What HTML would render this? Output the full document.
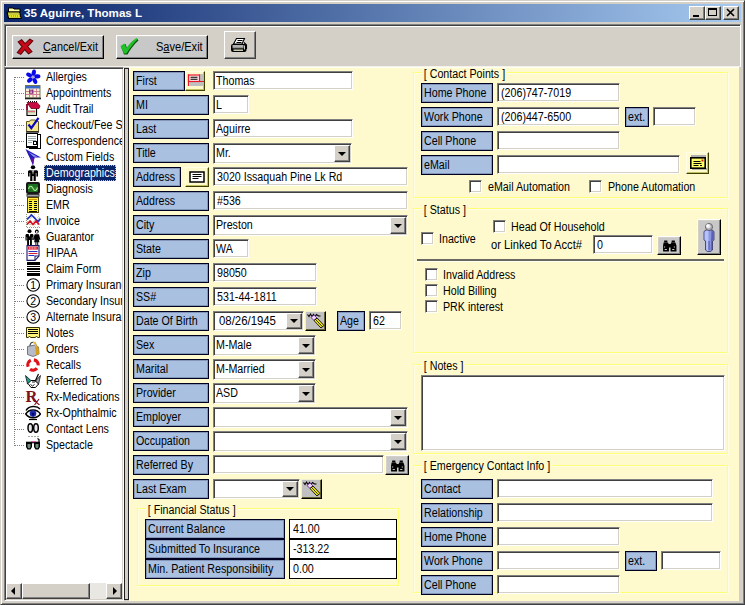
<!DOCTYPE html>
<html><head><meta charset="utf-8"><title>35 Aguirre, Thomas L</title>
<style>
html,body{margin:0;padding:0;background:#d4d0c8;overflow:hidden}
body{width:745px;height:605px;position:relative;font-family:"Liberation Sans",Arial,sans-serif;color:#000}
div,span.t,.abs,i{position:absolute;box-sizing:border-box}
.t{white-space:nowrap;transform-origin:0 50%;display:block}
.tb{font-weight:bold;color:#fff}
.win{background:#d4d0c8;border:1px solid;border-color:#d4d0c8 #404040 #404040 #d4d0c8;box-shadow:inset 1px 1px 0 #fff,inset -1px -1px 0 #808080}
.title{background:linear-gradient(90deg,#0a246a 0%,#a6caf0 100%)}
.tbar{background:#d4d0c8;border:1px solid;border-color:#808080 #fff #f4f2ec #808080;box-shadow:inset 1px 1px 0 #404040,inset 2px 2px 0 #fff}
.btn{background:#d4d0c8;border:1px solid;border-color:#fff #404040 #404040 #fff;box-shadow:inset -1px -1px 0 #808080,inset 1px 1px 0 #d4d0c8}
.gbtn{background:#c8c8c8;border-color:#fff #000 #000 #fff}
.pbtn{background:#c0c0c0;border:1px solid;border-color:#f0f0d0 #000 #000 #f0f0d0;box-shadow:inset -1px -1px 0 #606030}
.ybtn{background:#fffacd;border:1px solid;border-color:#ffffe8 #404000 #404000 #ffffe8;box-shadow:inset -1px -1px 0 #c0c060}
.tree{background:#fff;border:1px solid;border-color:#808080 #fff #fff #808080;box-shadow:inset 1px 1px 0 #404040,inset -1px -1px 0 #d4d0c8}
.split{background:#d4d0c8;border:1px solid #202020}
.main{background:#fffacd;border-top:1px solid #fffff0;border-left:1px solid #fffff0}
.lbl{background:#a9c0e0;border:1px solid #000020;box-shadow:inset 0 0 0 1px rgba(0,0,48,0.22)}
.inp{background:#fff;border:1px solid;border-color:#808080 #fff #fff #808080;box-shadow:inset 1px 1px 0 #404040,inset -1px -1px 0 #d4d0c8}
.finp{background:#fff;border:1px solid #000}
.chk{background:#fff;border:1px solid;border-color:#808080 #fff #fff #808080;box-shadow:inset 1px 1px 0 #404040,inset -1px -1px 0 #d4d0c8}
.grp{border:1px solid #ffff78;box-shadow:1px 1px 0 #fffde4,inset 1px 1px 0 #fffde4}
.leg{background:#fffacd;padding:0 2px;margin-left:-2px}
.hr{border-top:2px solid #686860;border-bottom:1px solid #fffff0}
.arr{left:50%;top:50%;margin:-2px 0 0 -4px;border:4px solid transparent;border-top-color:#000;border-bottom:0;width:0;height:0}
.arrl{left:50%;top:50%;margin:-4px 0 0 -3px;border:4px solid transparent;border-right-color:#000;border-left:0;width:0;height:0}
.arrr{left:50%;top:50%;margin:-4px 0 0 -1px;border:4px solid transparent;border-left-color:#000;border-right:0;width:0;height:0}
.sbtrack{background:#e9e7e2}
.dotv{width:1px;background-image:linear-gradient(#808080 50%,transparent 50%);background-size:1px 2px}
.doth{height:1px;background-image:linear-gradient(90deg,#808080 50%,transparent 50%);background-size:2px 1px}
</style></head>
<body>
<div class="win" style="left:0px;top:0px;width:745px;height:605px;"></div>
<div class="title" style="left:4px;top:4px;width:737px;height:18px;"></div>
<svg class="abs" style="left:6px;top:6px" width="17" height="14" viewBox="0 0 17 14"><path d="M2.500 2h4.500l1 1h6v3h-11.500z" fill="#ffffa0" stroke="#000" stroke-width="1"/><path d="M1 6h12.500l1.500 6.500H2.500z" fill="#e4e428" stroke="#000" stroke-width="1.200"/><path d="M2.500 7.500h11M3 9.500h11M3.500 11.500h11" stroke="#b0b058" stroke-width="1" stroke-dasharray="1 1"/><path d="M3.500 8.500h10.500M4 10.500h10" stroke="#b0b058" stroke-width="1" stroke-dasharray="1 1" stroke-dashoffset="1"/></svg>
<span class="t tb" style="left:24px;top:7.37px;font-size:11.6px;line-height:11.6px;transform:scaleX(1);">35 Aguirre, Thomas L</span>
<div class="btn" style="left:689px;top:6px;width:16px;height:14px;"></div>
<div class="btn" style="left:705px;top:6px;width:16px;height:14px;"></div>
<div class="btn" style="left:723px;top:6px;width:16px;height:14px;"></div>
<svg class="abs" style="left:689px;top:6px" width="50" height="14" viewBox="0 0 50 14"><rect x="4" y="9" width="6" height="2" fill="#000"/><rect x="19.5" y="2.5" width="8" height="7" fill="none" stroke="#000"/><rect x="19" y="2" width="9" height="2" fill="#000"/><path d="M38 3l7 7M45 3l-7 7" stroke="#000" stroke-width="1.6"/></svg>
<div class="tbar" style="left:4px;top:24px;width:737px;height:43px;"></div>
<div class="btn gbtn" style="left:12px;top:35px;width:92px;height:24px;"></div>
<div class="btn gbtn" style="left:116px;top:35px;width:92px;height:24px;"></div>
<div class="btn" style="left:224px;top:31px;width:32px;height:28px;"></div>
<svg class="abs" style="left:16px;top:38px" width="19" height="18" viewBox="0 0 22 20"><path d="M2.500 4l4-2.500 4 4.500 5.500-5 3.500 2-6 6.500 5 6-4 2.500-4.500-5-4.500 5.500-4-2 5.500-7z" fill="#c80818" stroke="#600008" stroke-width="1.200"/></svg>
<svg class="abs" style="left:119px;top:37px" width="22" height="20" viewBox="0 0 22 20"><path d="M2 9.500l4.500-2.500 1.500 4C11 7 14 4 18 1.500l1.500 2C15 7.500 11.500 12 8.500 17.500H5z" fill="#0a5010"/><path d="M1.500 9l4-2.500 2 4.500C10.500 6.500 13.500 3.500 17.500 1l1 1.500C14.500 6.500 11 11 7.500 16.500H5z" fill="#20c028"/></svg>
<span class="t" style="left:43px;top:41.03px;font-size:12px;line-height:12px;transform:scaleX(0.905);"><u>C</u>ancel/Exit</span>
<span class="t" style="left:156px;top:41.03px;font-size:12px;line-height:12px;transform:scaleX(0.92);">S<u>a</u>ve/Exit</span>
<svg class="abs" style="left:230px;top:37px" width="18" height="16" viewBox="0 0 18 16"><path d="M6.500 1.500h8l-2.500 5.500H3.500z" fill="#fff" stroke="#000" stroke-width="1.100"/><path d="M7.500 3.500h5M6.500 5.500h5" stroke="#000" stroke-width="1"/><rect x="1" y="7" width="15.500" height="8" rx="2" fill="#000"/><path d="M2.500 9h11" stroke="#fff" stroke-width="1.400"/><path d="M2.500 10.700h11" stroke="#a8a8a8" stroke-width="1.200"/><path d="M3.500 13.200h9.500" stroke="#f0f0c8" stroke-width="1.300"/><path d="M14 5.500l2.500 2.500v4" fill="none" stroke="#000" stroke-width="1.100"/><path d="M14.500 8.500v4" stroke="#c8c8c8" stroke-width="1"/></svg>
<div class="tree" style="left:4px;top:67px;width:120px;height:534px;"></div>
<div class="abs" style="left:6px;top:69px;width:116px;height:514px;overflow:hidden">
<div class="dotv" style="left:8px;top:8px;height:369px"></div>
<div class="doth" style="left:9px;top:8px;width:10px"></div>
<span class="t" style="left:40px;top:2px;font-size:12px;line-height:12px;transform:scaleX(0.89)">Allergies</span>
<div class="doth" style="left:9px;top:24px;width:10px"></div>
<span class="t" style="left:40px;top:18px;font-size:12px;line-height:12px;transform:scaleX(0.89)">Appointments</span>
<div class="doth" style="left:9px;top:40px;width:10px"></div>
<span class="t" style="left:40px;top:34px;font-size:12px;line-height:12px;transform:scaleX(0.89)">Audit Trail</span>
<div class="doth" style="left:9px;top:56px;width:10px"></div>
<span class="t" style="left:40px;top:50px;font-size:12px;line-height:12px;transform:scaleX(0.89)">Checkout/Fee S</span>
<div class="doth" style="left:9px;top:72px;width:10px"></div>
<span class="t" style="left:40px;top:66px;font-size:12px;line-height:12px;transform:scaleX(0.89)">Correspondence</span>
<div class="doth" style="left:9px;top:88px;width:10px"></div>
<span class="t" style="left:40px;top:82px;font-size:12px;line-height:12px;transform:scaleX(0.89)">Custom Fields</span>
<div class="doth" style="left:9px;top:104px;width:10px"></div>
<div class="abs" style="left:38px;top:96px;width:72px;height:16px;background:#0a246a;outline:1px dotted #c8c8a0;outline-offset:-1px"></div>
<span class="t" style="left:40px;top:98px;font-size:12px;line-height:12px;transform:scaleX(0.89);color:#fff">Demographics</span>
<div class="doth" style="left:9px;top:120px;width:10px"></div>
<span class="t" style="left:40px;top:114px;font-size:12px;line-height:12px;transform:scaleX(0.89)">Diagnosis</span>
<div class="doth" style="left:9px;top:136px;width:10px"></div>
<span class="t" style="left:40px;top:130px;font-size:12px;line-height:12px;transform:scaleX(0.89)">EMR</span>
<div class="doth" style="left:9px;top:152px;width:10px"></div>
<span class="t" style="left:40px;top:146px;font-size:12px;line-height:12px;transform:scaleX(0.89)">Invoice</span>
<div class="doth" style="left:9px;top:168px;width:10px"></div>
<span class="t" style="left:40px;top:162px;font-size:12px;line-height:12px;transform:scaleX(0.89)">Guarantor</span>
<div class="doth" style="left:9px;top:184px;width:10px"></div>
<span class="t" style="left:40px;top:178px;font-size:12px;line-height:12px;transform:scaleX(0.89)">HIPAA</span>
<div class="doth" style="left:9px;top:200px;width:10px"></div>
<span class="t" style="left:40px;top:194px;font-size:12px;line-height:12px;transform:scaleX(0.89)">Claim Form</span>
<div class="doth" style="left:9px;top:216px;width:10px"></div>
<span class="t" style="left:40px;top:210px;font-size:12px;line-height:12px;transform:scaleX(0.89)">Primary Insuranc</span>
<div class="doth" style="left:9px;top:232px;width:10px"></div>
<span class="t" style="left:40px;top:226px;font-size:12px;line-height:12px;transform:scaleX(0.89)">Secondary Insur</span>
<div class="doth" style="left:9px;top:248px;width:10px"></div>
<span class="t" style="left:40px;top:242px;font-size:12px;line-height:12px;transform:scaleX(0.89)">Alternate Insuran</span>
<div class="doth" style="left:9px;top:264px;width:10px"></div>
<span class="t" style="left:40px;top:258px;font-size:12px;line-height:12px;transform:scaleX(0.89)">Notes</span>
<div class="doth" style="left:9px;top:280px;width:10px"></div>
<span class="t" style="left:40px;top:274px;font-size:12px;line-height:12px;transform:scaleX(0.89)">Orders</span>
<div class="doth" style="left:9px;top:296px;width:10px"></div>
<span class="t" style="left:40px;top:290px;font-size:12px;line-height:12px;transform:scaleX(0.89)">Recalls</span>
<div class="doth" style="left:9px;top:312px;width:10px"></div>
<span class="t" style="left:40px;top:306px;font-size:12px;line-height:12px;transform:scaleX(0.89)">Referred To</span>
<div class="doth" style="left:9px;top:328px;width:10px"></div>
<span class="t" style="left:40px;top:322px;font-size:12px;line-height:12px;transform:scaleX(0.89)">Rx-Medications</span>
<div class="doth" style="left:9px;top:344px;width:10px"></div>
<span class="t" style="left:40px;top:338px;font-size:12px;line-height:12px;transform:scaleX(0.89)">Rx-Ophthalmic</span>
<div class="doth" style="left:9px;top:360px;width:10px"></div>
<span class="t" style="left:40px;top:354px;font-size:12px;line-height:12px;transform:scaleX(0.89)">Contact Lens</span>
<div class="doth" style="left:9px;top:376px;width:10px"></div>
<span class="t" style="left:40px;top:370px;font-size:12px;line-height:12px;transform:scaleX(0.89)">Spectacle</span>
<svg class="abs" style="left:19px;top:0px" width="16" height="16" viewBox="0 0 16 16"><ellipse cx="8.75" cy="3.77" rx="2.1" ry="3.2" transform="rotate(10 8.75 3.77)" fill="#0808e8"/><ellipse cx="12.26" cy="7.40" rx="2.1" ry="3.2" transform="rotate(82 12.26 7.40)" fill="#0808e8"/><ellipse cx="9.88" cy="11.86" rx="2.1" ry="3.2" transform="rotate(154 9.88 11.86)" fill="#0808e8"/><ellipse cx="4.91" cy="10.99" rx="2.1" ry="3.2" transform="rotate(226 4.91 10.99)" fill="#0808e8"/><ellipse cx="4.20" cy="5.98" rx="2.1" ry="3.2" transform="rotate(298 4.20 5.98)" fill="#0808e8"/><circle cx="8" cy="8" r="1.6" fill="#a8a8c8"/></svg>
<svg class="abs" style="left:19px;top:16px" width="16" height="16" viewBox="0 0 16 16"><rect x="1" y="1" width="14" height="12" fill="#f4f0d8"/><rect x="1" y="0.5" width="14" height="3" fill="#3868c8"/><path d="M1 6.5h14M1 9.5h14M4.5 3.5v9M8 3.5v9M11.5 3.5v9" stroke="#d08090" stroke-width="1"/><rect x="4.7" y="5.2" width="3" height="3" fill="none" stroke="#802080" stroke-width="1"/><rect x="0.5" y="0.5" width="14.5" height="12.5" fill="none" stroke="#707850" stroke-width="1"/><path d="M0 13.5h16" stroke="#202020" stroke-width="1.6"/></svg>
<svg class="abs" style="left:19px;top:32px" width="16" height="16" viewBox="0 0 16 16"><path d="M2 3.5h9.5v11h-9.5z" fill="#fff" stroke="#000" stroke-width="1.2"/><path d="M3 9.5h7M3 11.5h7M3 13h7" stroke="#c0c8a0" stroke-width="1"/><path d="M3 10.5h7" stroke="#e04060" stroke-width="0.8"/><path d="M2 1.5h10l3 3.5-1 2.5H6z" fill="#c80840" stroke="#700020" stroke-width="0.8"/><path d="M2 3v6" stroke="#a00030" stroke-width="1.6"/><path d="M3 0.5h9" stroke="#000" stroke-width="1" stroke-dasharray="1 1"/></svg>
<svg class="abs" style="left:19px;top:48px" width="16" height="16" viewBox="0 0 16 16"><path d="M1.5 4.5h3l1-1.5h5l1 1.5h2v10h-12z" fill="#f4e890" stroke="#605820" stroke-width="1"/><path d="M1 15h13" stroke="#202020" stroke-width="1.4"/><path d="M3.5 7.5l2.8 3.6L13.5 0.8" fill="none" stroke="#0808c0" stroke-width="2.2"/></svg>
<svg class="abs" style="left:19px;top:64px" width="16" height="16" viewBox="0 0 16 16"><g shape-rendering="crispEdges"><rect x="4" y="1" width="11" height="14" fill="#fff" stroke="#000" stroke-width="1"/><rect x="1.500" y="0.500" width="11" height="13" fill="#fff" stroke="#000" stroke-width="1"/><path d="M3 3.500h8M3 5.500h8M3 7.500h8M3 9.500h4" stroke="#98a8a8" stroke-width="1"/><rect x="8.500" y="8.500" width="3" height="3" fill="#fff" stroke="#000" stroke-width="1"/><path d="M1 14.500h12" stroke="#000" stroke-width="1"/></g></svg>
<svg class="abs" style="left:19px;top:80px" width="16" height="16" viewBox="0 0 16 16"><path d="M0.500 0L16 8.500H9.500L8 16.500 5 9.500z" fill="#2818b8"/><path d="M3.500 3L12.500 7.800H8.500z" fill="#8898f0"/><path d="M6 9.500l2 6.500L9.300 9z" fill="#6810a8"/></svg>
<svg class="abs" style="left:19px;top:96px" width="16" height="16" viewBox="0 0 16 16"><ellipse cx="8" cy="2.3" rx="2.2" ry="2" fill="#000"/><path d="M4 5.2h8l1 1v5.3h-1.6V8h-0.6v8H8.6V11H7.4v5H5.2V8H4.6v3.5H3V6.2z" fill="#000"/><path d="M6.6 5.2h2.8L8 9.5z" fill="#fff"/><path d="M8 5.5v3" stroke="#000" stroke-width="0.7"/></svg>
<svg class="abs" style="left:19px;top:112px" width="16" height="16" viewBox="0 0 16 16"><rect x="1" y="1" width="14" height="12" rx="2" fill="#181818"/><rect x="3" y="3" width="10" height="8" rx="1" fill="#187020"/><path d="M3.500 8c1-3.500 3-3.500 4.500-0.500s3.500 2.500 4.500-1" fill="none" stroke="#b8f090" stroke-width="1.100"/><path d="M3.5 7h9" stroke="#60b060" stroke-width="0.5"/><rect x="2" y="13.5" width="12" height="1.8" fill="#b0b0b8" stroke="#202020" stroke-width="0.8"/></svg>
<svg class="abs" style="left:19px;top:128px" width="16" height="16" viewBox="0 0 16 16"><g shape-rendering="crispEdges"><rect x="2.500" y="0.500" width="11" height="15" fill="#fff040" stroke="#504000" stroke-width="1"/><path d="M4 2.500h8" stroke="#e09000" stroke-width="1"/><path d="M4 4.500h3M9 4.500h3M4 6.500h3M9 6.500h3M4 8.500h3M9 8.500h3M4 10.500h3M9 10.500h3M4 12.500h3M9 12.500h3M4 14.500h8" stroke="#000" stroke-width="1"/></g></svg>
<svg class="abs" style="left:19px;top:144px" width="16" height="16" viewBox="0 0 16 16"><path d="M1.500 1v13.500h13.500" fill="none" stroke="#909870" stroke-width="1" stroke-dasharray="1 1"/><path d="M2 4.500h13M2 8.500h13M2 11.500h13M5.500 1v13M9.500 1v13M13.500 1v13" stroke="#d0d0b8" stroke-width="1" stroke-dasharray="1 1"/><path d="M2 6.500L6.500 2 10 5.500l3 3 2.500-3" fill="none" stroke="#2030c8" stroke-width="1.700"/><path d="M2 11.500l3-3.500 3 3.500 3-3.500 3 3.500" fill="none" stroke="#d81020" stroke-width="1.700"/></svg>
<svg class="abs" style="left:19px;top:160px" width="16" height="16" viewBox="0 0 16 16"><ellipse cx="4.5" cy="2.2" rx="2" ry="1.9" fill="#000"/><path d="M1.3 5h6.4l0.8 1v5H7.3V8H6.9v8H5V11H4v5H2.1V8H1.7v3.5H0.5V6z" fill="#000"/><path d="M3.6 5h1.8L4.5 8z" fill="#fff"/><ellipse cx="11.8" cy="2.6" rx="1.9" ry="2" fill="#000"/><path d="M9.6 5.2h4.4l1.4 5.5h-1.2l-0.6-2 0.9 4.6h-1.3V16h-1v-2.7h-0.8V16h-1v-2.7H9.1L10 8.7l-0.6 2H8.2z" fill="#000"/><ellipse cx="11.8" cy="3" rx="0.9" ry="1.1" fill="#fff"/></svg>
<svg class="abs" style="left:19px;top:176px" width="16" height="16" viewBox="0 0 16 16"><path d="M2 0.6h12v10.5l-4 4.3H2z" fill="#fff" stroke="#181860" stroke-width="1.1"/><rect x="3" y="1.6" width="10" height="3" fill="#e02030"/><path d="M4 3h8" stroke="#fff" stroke-width="1" stroke-dasharray="1 0.6"/><path d="M3.5 6.5h9M3.5 10.5h6" stroke="#2030c0" stroke-width="1.1"/><path d="M3.5 8.5h9" stroke="#e02030" stroke-width="1.1"/><path d="M14 11h-4v4.4" fill="none" stroke="#181860" stroke-width="1"/></svg>
<svg class="abs" style="left:19px;top:192px" width="16" height="16" viewBox="0 0 16 16"><g shape-rendering="crispEdges"><rect x="2" y="1" width="13" height="3" fill="#000"/><rect x="2" y="5" width="13" height="1" fill="#000"/><rect x="2" y="7" width="13" height="2" fill="#000"/><rect x="2" y="10" width="13" height="1" fill="#000"/><rect x="2" y="12" width="13" height="3" fill="#000"/></g></svg>
<svg class="abs" style="left:19px;top:208px" width="16" height="16" viewBox="0 0 16 16"><circle cx="8.2" cy="8" r="6.3" fill="#fff" stroke="#000" stroke-width="1.1"/><text x="8.2" y="11.6" text-anchor="middle" font-family="Liberation Sans,sans-serif" font-size="10.5">1</text></svg>
<svg class="abs" style="left:19px;top:224px" width="16" height="16" viewBox="0 0 16 16"><circle cx="8.2" cy="8" r="6.3" fill="#fff" stroke="#000" stroke-width="1.1"/><text x="8.2" y="11.6" text-anchor="middle" font-family="Liberation Sans,sans-serif" font-size="10.5">2</text></svg>
<svg class="abs" style="left:19px;top:240px" width="16" height="16" viewBox="0 0 16 16"><circle cx="8.2" cy="8" r="6.3" fill="#fff" stroke="#000" stroke-width="1.1"/><text x="8.2" y="11.6" text-anchor="middle" font-family="Liberation Sans,sans-serif" font-size="10.5">3</text></svg>
<svg class="abs" style="left:19px;top:256px" width="16" height="16" viewBox="0 0 16 16"><path d="M1.500 2.500h13v10h-1.500l-1.500-1-1.500 1H6L4.500 11.500 3 12.500H1.500z" fill="#fff478" stroke="#383000" stroke-width="1"/><path d="M3 4.500h10M3 6.500h10M3 8.500h10" stroke="#000" stroke-width="1" shape-rendering="crispEdges"/></svg>
<svg class="abs" style="left:19px;top:272px" width="16" height="16" viewBox="0 0 16 16"><path d="M5 5c0-5 6-5 6 0" fill="none" stroke="#404048" stroke-width="1.2"/><path d="M2.5 5.5L10 4l3.5 2 0.5 7-6 2.5-5.5-2z" fill="#b8bcc8" stroke="#585c68" stroke-width="0.8"/><path d="M10 4l3.5 2 0.5 7-3 1.2z" fill="#d8a018"/><path d="M8 1.5c2 0 3 1.500 3 4" fill="none" stroke="#f0c020" stroke-width="1.4"/></svg>
<svg class="abs" style="left:19px;top:288px" width="16" height="16" viewBox="0 0 16 16"><path d="M8.90 2.88A5.2 5.2 0 0 1 13.18 8.45" fill="none" stroke="#e01018" stroke-width="3.2"/><path d="M11.98 11.34A5.2 5.2 0 0 1 5.02 12.26" fill="none" stroke="#e01018" stroke-width="3.2"/><path d="M3.11 9.78A5.2 5.2 0 0 1 5.80 3.29" fill="none" stroke="#e01018" stroke-width="3.2"/><circle cx="8" cy="8" r="2.4" fill="#fff"/></svg>
<svg class="abs" style="left:19px;top:304px" width="16" height="16" viewBox="0 0 16 16"><path d="M0.5 2.5L7 8.5 2.5 11z" fill="#18a090" stroke="#000" stroke-width="0.7"/><path d="M15.5 2.500L10 8.500l3.500 3z" fill="#a0a0a8" stroke="#000" stroke-width="0.7"/><path d="M3 10.500l3-3h4l3.500 3.500-3 3.500H6z" fill="#fff" stroke="#000" stroke-width="1"/><path d="M5.500 11.500l2 1.500 2-1.500M7 9h3" fill="none" stroke="#000" stroke-width="0.9"/><path d="M10 8.500L13.500 1" stroke="#000" stroke-width="1.2"/></svg>
<svg class="abs" style="left:19px;top:320px" width="16" height="16" viewBox="0 0 16 16"><text x="0.5" y="12.5" font-family="Liberation Serif,serif" font-weight="bold" font-size="16.500" fill="#801018">R</text><path d="M8 10.500l6.500 5.500M14 10l-4.500 6" stroke="#801018" stroke-width="1.1" fill="none"/></svg>
<svg class="abs" style="left:19px;top:336px" width="16" height="16" viewBox="0 0 16 16"><path d="M1 5.500C4 0.500 12 0.500 15 4" fill="none" stroke="#000" stroke-width="1.4"/><path d="M0.800 9C4 3.500 12 3.500 15.500 9 12 14 4 14 0.800 9z" fill="#fff" stroke="#000" stroke-width="1.5"/><circle cx="8" cy="8.600" r="3.300" fill="#1828a8"/><path d="M6.500 8l1.500 3.500L9.500 8z" fill="#000060"/><path d="M4 14.500h8" stroke="#000" stroke-width="1.2"/></svg>
<svg class="abs" style="left:19px;top:352px" width="16" height="16" viewBox="0 0 16 16"><ellipse cx="5.300" cy="7" rx="2.300" ry="4.200" fill="#e8e8e8" stroke="#000" stroke-width="1.500"/><ellipse cx="11" cy="7" rx="2.300" ry="4.200" fill="#e8e8e8" stroke="#000" stroke-width="1.500"/><path d="M3 15.500h11" stroke="#80a080" stroke-width="0.800" stroke-dasharray="2 1"/></svg>
<svg class="abs" style="left:19px;top:368px" width="16" height="16" viewBox="0 0 16 16"><path d="M1 5.500h14" stroke="#000" stroke-width="1.600"/><path d="M6 4.800h5" stroke="#e040a0" stroke-width="1"/><path d="M12.500 1.500l1.500 1v3" fill="none" stroke="#000" stroke-width="1.200"/><path d="M1 5.500h6v4.500l-1.500 2.500h-3L1 10z" fill="#000"/><path d="M9 5.500h6V10l-1.500 2.500h-3L9 10z" fill="#000"/><path d="M2.500 7h3v3l-0.800 1.200H3.300L2.500 10z" fill="#709080"/><path d="M10.500 7h3v3l-0.800 1.200h-1.400L10.500 10z" fill="#709080"/></svg>

</div>
<div class="sbtrack" style="left:6px;top:583px;width:116px;height:16px;"></div>
<div class="btn" style="left:6px;top:583px;width:16px;height:16px;"><i class="arrl"></i></div>
<div class="btn" style="left:22px;top:583px;width:68px;height:16px;"></div>
<div class="btn" style="left:106px;top:583px;width:16px;height:16px;"><i class="arrr"></i></div>
<div class="split" style="left:124px;top:68px;width:5px;height:532px;"></div>
<div class="main" style="left:129px;top:67px;width:610px;height:534px;"></div>
<div class="lbl" style="left:133px;top:71px;width:52px;height:20px;"></div>
<span class="t" style="left:136px;top:75.03px;font-size:12px;line-height:12px;transform:scaleX(0.89);">First</span>
<div class="lbl" style="left:133px;top:95px;width:76px;height:20px;"></div>
<span class="t" style="left:136px;top:99.03px;font-size:12px;line-height:12px;transform:scaleX(0.89);">MI</span>
<div class="lbl" style="left:133px;top:119px;width:76px;height:20px;"></div>
<span class="t" style="left:136px;top:123.03px;font-size:12px;line-height:12px;transform:scaleX(0.89);">Last</span>
<div class="lbl" style="left:133px;top:143px;width:76px;height:20px;"></div>
<span class="t" style="left:136px;top:147.03px;font-size:12px;line-height:12px;transform:scaleX(0.89);">Title</span>
<div class="lbl" style="left:133px;top:167px;width:48px;height:20px;"></div>
<span class="t" style="left:136px;top:171.03px;font-size:12px;line-height:12px;transform:scaleX(0.89);">Address</span>
<div class="lbl" style="left:133px;top:191px;width:76px;height:20px;"></div>
<span class="t" style="left:136px;top:195.03px;font-size:12px;line-height:12px;transform:scaleX(0.89);">Address</span>
<div class="lbl" style="left:133px;top:215px;width:76px;height:20px;"></div>
<span class="t" style="left:136px;top:219.03px;font-size:12px;line-height:12px;transform:scaleX(0.89);">City</span>
<div class="lbl" style="left:133px;top:239px;width:76px;height:20px;"></div>
<span class="t" style="left:136px;top:243.03px;font-size:12px;line-height:12px;transform:scaleX(0.89);">State</span>
<div class="lbl" style="left:133px;top:263px;width:76px;height:20px;"></div>
<span class="t" style="left:136px;top:267.03px;font-size:12px;line-height:12px;transform:scaleX(0.89);">Zip</span>
<div class="lbl" style="left:133px;top:287px;width:76px;height:20px;"></div>
<span class="t" style="left:136px;top:291.03px;font-size:12px;line-height:12px;transform:scaleX(0.89);">SS#</span>
<div class="lbl" style="left:133px;top:311px;width:76px;height:20px;"></div>
<span class="t" style="left:136px;top:315.03px;font-size:12px;line-height:12px;transform:scaleX(0.89);">Date Of Birth</span>
<div class="lbl" style="left:133px;top:335px;width:76px;height:20px;"></div>
<span class="t" style="left:136px;top:339.03px;font-size:12px;line-height:12px;transform:scaleX(0.89);">Sex</span>
<div class="lbl" style="left:133px;top:359px;width:76px;height:20px;"></div>
<span class="t" style="left:136px;top:363.03px;font-size:12px;line-height:12px;transform:scaleX(0.89);">Marital</span>
<div class="lbl" style="left:133px;top:383px;width:76px;height:20px;"></div>
<span class="t" style="left:136px;top:387.03px;font-size:12px;line-height:12px;transform:scaleX(0.89);">Provider</span>
<div class="lbl" style="left:133px;top:407px;width:76px;height:20px;"></div>
<span class="t" style="left:136px;top:411.03px;font-size:12px;line-height:12px;transform:scaleX(0.89);">Employer</span>
<div class="lbl" style="left:133px;top:431px;width:76px;height:20px;"></div>
<span class="t" style="left:136px;top:435.03px;font-size:12px;line-height:12px;transform:scaleX(0.89);">Occupation</span>
<div class="lbl" style="left:133px;top:455px;width:76px;height:20px;"></div>
<span class="t" style="left:136px;top:459.03px;font-size:12px;line-height:12px;transform:scaleX(0.89);">Referred By</span>
<div class="lbl" style="left:133px;top:479px;width:76px;height:20px;"></div>
<span class="t" style="left:136px;top:483.03px;font-size:12px;line-height:12px;transform:scaleX(0.89);">Last Exam</span>
<div class="ybtn" style="left:185px;top:71px;width:20px;height:20px;"></div>
<svg class="abs" style="left:187px;top:73px" width="18" height="14" viewBox="0 0 18 14"><rect x="12" y="1" width="4.500" height="7.500" fill="#c0c0c0"/><rect x="2.500" y="9" width="14" height="4" fill="#c0c0c0"/><rect x="1.500" y="2" width="11" height="6.500" fill="#ffe8e8" stroke="#e81828" stroke-width="1.200"/><path d="M1.500 1.500v11.500M1.500 8.500h15.500" stroke="#e81828" stroke-width="1.200"/><path d="M3.500 4.200h7M3.500 6.300h7" stroke="#000" stroke-width="1.100"/></svg>
<div class="ybtn" style="left:185px;top:167px;width:24px;height:20px;"></div>
<svg class="abs" style="left:189px;top:171px" width="16" height="12" viewBox="0 0 16 12"><rect x="1" y="1" width="14" height="10" fill="#fff" stroke="#000" stroke-width="1.500"/><path d="M3.500 3.500h9M3.500 5.500h9M3.500 7.500h6" stroke="#000" stroke-width="1"/></svg>
<div class="inp" style="left:213px;top:71px;width:140px;height:19px;"></div>
<span class="t" style="left:216px;top:75.03px;font-size:12px;line-height:12px;transform:scaleX(0.89);">Thomas</span>
<div class="inp" style="left:213px;top:95px;width:36px;height:19px;"></div>
<span class="t" style="left:216px;top:99.03px;font-size:12px;line-height:12px;transform:scaleX(0.89);">L</span>
<div class="inp" style="left:213px;top:119px;width:140px;height:19px;"></div>
<span class="t" style="left:216px;top:123.03px;font-size:12px;line-height:12px;transform:scaleX(0.89);">Aguirre</span>
<div class="inp" style="left:213px;top:143px;width:139px;height:21px;"></div>
<div class="btn" style="left:334px;top:145px;width:16px;height:17px;"><i class="arr"></i></div>
<span class="t" style="left:216px;top:147.03px;font-size:12px;line-height:12px;transform:scaleX(0.89);">Mr.</span>
<div class="inp" style="left:213px;top:167px;width:195px;height:19px;"></div>
<span class="t" style="left:217px;top:171.03px;font-size:12px;line-height:12px;transform:scaleX(0.89);">3020 Issaquah Pine Lk Rd</span>
<div class="inp" style="left:213px;top:191px;width:195px;height:19px;"></div>
<span class="t" style="left:217px;top:195.03px;font-size:12px;line-height:12px;transform:scaleX(0.89);">#536</span>
<div class="inp" style="left:213px;top:215px;width:195px;height:21px;"></div>
<div class="btn" style="left:390px;top:217px;width:16px;height:17px;"><i class="arr"></i></div>
<span class="t" style="left:216px;top:219.03px;font-size:12px;line-height:12px;transform:scaleX(0.89);">Preston</span>
<div class="inp" style="left:213px;top:239px;width:36px;height:19px;"></div>
<span class="t" style="left:216px;top:243.03px;font-size:12px;line-height:12px;transform:scaleX(0.89);">WA</span>
<div class="inp" style="left:213px;top:263px;width:104px;height:19px;"></div>
<span class="t" style="left:217px;top:267.03px;font-size:12px;line-height:12px;transform:scaleX(0.89);">98050</span>
<div class="inp" style="left:213px;top:287px;width:104px;height:19px;"></div>
<span class="t" style="left:217px;top:291.03px;font-size:12px;line-height:12px;transform:scaleX(0.89);">531-44-1811</span>
<div class="inp" style="left:213px;top:311px;width:91px;height:20px;"></div>
<div class="btn" style="left:286px;top:313px;width:16px;height:16px;"><i class="arr"></i></div>
<span class="t" style="left:218.5px;top:315.03px;font-size:12px;line-height:12px;transform:scaleX(0.948);">08/26/1945</span>
<div class="inp" style="left:213px;top:335px;width:103px;height:21px;"></div>
<div class="btn" style="left:298px;top:337px;width:16px;height:17px;"><i class="arr"></i></div>
<span class="t" style="left:216px;top:339.03px;font-size:12px;line-height:12px;transform:scaleX(0.89);">M-Male</span>
<div class="inp" style="left:213px;top:359px;width:103px;height:21px;"></div>
<div class="btn" style="left:298px;top:361px;width:16px;height:17px;"><i class="arr"></i></div>
<span class="t" style="left:216px;top:363.03px;font-size:12px;line-height:12px;transform:scaleX(0.89);">M-Married</span>
<div class="inp" style="left:213px;top:383px;width:103px;height:21px;"></div>
<div class="btn" style="left:298px;top:385px;width:16px;height:17px;"><i class="arr"></i></div>
<span class="t" style="left:216px;top:387.03px;font-size:12px;line-height:12px;transform:scaleX(0.89);">ASD</span>
<div class="inp" style="left:213px;top:407px;width:195px;height:21px;"></div>
<div class="btn" style="left:390px;top:409px;width:16px;height:17px;"><i class="arr"></i></div>
<div class="inp" style="left:213px;top:431px;width:195px;height:21px;"></div>
<div class="btn" style="left:390px;top:433px;width:16px;height:17px;"><i class="arr"></i></div>
<div class="inp" style="left:213px;top:455px;width:171px;height:19px;"></div>
<div class="inp" style="left:213px;top:479px;width:87px;height:20px;"></div>
<div class="btn" style="left:282px;top:481px;width:16px;height:16px;"><i class="arr"></i></div>
<div class="pbtn" style="left:305px;top:311px;width:21px;height:20px;"></div>
<div class="pbtn" style="left:301px;top:479px;width:21px;height:20px;"></div>
<div class="lbl" style="left:337px;top:311px;width:28px;height:20px;"></div>
<span class="t" style="left:340px;top:315.03px;font-size:12px;line-height:12px;transform:scaleX(0.89);">Age</span>
<div class="inp" style="left:369px;top:311px;width:33px;height:19px;"></div>
<span class="t" style="left:373px;top:315.03px;font-size:12px;line-height:12px;transform:scaleX(0.89);">62</span>
<div class="btn gbtn" style="left:385px;top:455px;width:24px;height:20px;"></div>
<div class="grp" style="left:137px;top:508px;width:262px;height:78px;"></div>
<span class="t leg" style="left:148px;top:504.03px;font-size:12px;line-height:12px;transform:scaleX(0.89);">[ Financial Status ]</span>
<div class="lbl" style="left:145px;top:519px;width:140px;height:20px;"></div>
<span class="t" style="left:148px;top:523.03px;font-size:12px;line-height:12px;transform:scaleX(0.89);">Current Balance</span>
<div class="finp" style="left:289px;top:519px;width:108px;height:20px;"></div>
<span class="t" style="left:293px;top:523.03px;font-size:12px;line-height:12px;transform:scaleX(0.89);">41.00</span>
<div class="lbl" style="left:145px;top:539px;width:140px;height:20px;"></div>
<span class="t" style="left:148px;top:543.03px;font-size:12px;line-height:12px;transform:scaleX(0.89);">Submitted To Insurance</span>
<div class="finp" style="left:289px;top:539px;width:108px;height:20px;"></div>
<span class="t" style="left:293px;top:543.03px;font-size:12px;line-height:12px;transform:scaleX(0.89);">-313.22</span>
<div class="lbl" style="left:145px;top:559px;width:140px;height:20px;"></div>
<span class="t" style="left:148px;top:563.03px;font-size:12px;line-height:12px;transform:scaleX(0.89);">Min. Patient Responsibility</span>
<div class="finp" style="left:289px;top:559px;width:108px;height:20px;"></div>
<span class="t" style="left:293px;top:563.03px;font-size:12px;line-height:12px;transform:scaleX(0.89);">0.00</span>
<div class="grp" style="left:413px;top:72px;width:315px;height:126px;"></div>
<span class="t leg" style="left:424px;top:68.03px;font-size:12px;line-height:12px;transform:scaleX(0.89);">[ Contact Points ]</span>
<div class="lbl" style="left:421px;top:83px;width:72px;height:20px;"></div>
<span class="t" style="left:424px;top:87.03px;font-size:12px;line-height:12px;transform:scaleX(0.89);">Home Phone</span>
<div class="lbl" style="left:421px;top:107px;width:72px;height:20px;"></div>
<span class="t" style="left:424px;top:111.03px;font-size:12px;line-height:12px;transform:scaleX(0.89);">Work Phone</span>
<div class="lbl" style="left:421px;top:131px;width:72px;height:20px;"></div>
<span class="t" style="left:424px;top:135.03px;font-size:12px;line-height:12px;transform:scaleX(0.89);">Cell Phone</span>
<div class="lbl" style="left:421px;top:155px;width:72px;height:20px;"></div>
<span class="t" style="left:424px;top:159.03px;font-size:12px;line-height:12px;transform:scaleX(0.89);">eMail</span>
<div class="inp" style="left:497px;top:83px;width:123px;height:19px;"></div>
<span class="t" style="left:501px;top:87.03px;font-size:12px;line-height:12px;transform:scaleX(0.89);">(206)747-7019</span>
<div class="inp" style="left:497px;top:107px;width:123px;height:19px;"></div>
<span class="t" style="left:501px;top:111.03px;font-size:12px;line-height:12px;transform:scaleX(0.89);">(206)447-6500</span>
<div class="inp" style="left:497px;top:131px;width:123px;height:19px;"></div>
<div class="inp" style="left:497px;top:155px;width:183px;height:19px;"></div>
<div class="lbl" style="left:625px;top:107px;width:24px;height:20px;"></div>
<span class="t" style="left:628px;top:111.03px;font-size:12px;line-height:12px;transform:scaleX(0.89);">ext.</span>
<div class="inp" style="left:653px;top:107px;width:43px;height:19px;"></div>
<div class="ybtn" style="left:686px;top:152px;width:23px;height:22px;"></div>
<div class="chk" style="left:469px;top:180px;width:13px;height:13px;"></div>
<span class="t" style="left:488px;top:181.03px;font-size:12px;line-height:12px;transform:scaleX(0.89);">eMail Automation</span>
<div class="chk" style="left:589px;top:180px;width:13px;height:13px;"></div>
<span class="t" style="left:608px;top:181.03px;font-size:12px;line-height:12px;transform:scaleX(0.89);">Phone Automation</span>
<div class="grp" style="left:413px;top:208px;width:315px;height:145px;"></div>
<span class="t leg" style="left:424px;top:204.03px;font-size:12px;line-height:12px;transform:scaleX(0.89);">[ Status ]</span>
<div class="chk" style="left:493px;top:220px;width:13px;height:13px;"></div>
<span class="t" style="left:511px;top:221.03px;font-size:12px;line-height:12px;transform:scaleX(0.89);">Head Of Household</span>
<div class="chk" style="left:421px;top:232px;width:13px;height:13px;"></div>
<span class="t" style="left:439px;top:233.03px;font-size:12px;line-height:12px;transform:scaleX(0.89);">Inactive</span>
<span class="t" style="left:491px;top:239.03px;font-size:12px;line-height:12px;transform:scaleX(0.93);">or Linked To Acct#</span>
<div class="inp" style="left:593px;top:235px;width:60px;height:19px;"></div>
<span class="t" style="left:597px;top:239.03px;font-size:12px;line-height:12px;transform:scaleX(0.89);">0</span>
<div class="btn gbtn" style="left:657px;top:236px;width:24px;height:19px;"></div>
<div class="btn gbtn" style="left:697px;top:219px;width:24px;height:36px;"></div>
<div class="hr" style="left:417px;top:259px;width:307px;height:3px;"></div>
<div class="chk" style="left:425px;top:268px;width:13px;height:13px;"></div>
<span class="t" style="left:443px;top:269.03px;font-size:12px;line-height:12px;transform:scaleX(0.89);">Invalid Address</span>
<div class="chk" style="left:425px;top:284px;width:13px;height:13px;"></div>
<span class="t" style="left:443px;top:285.03px;font-size:12px;line-height:12px;transform:scaleX(0.89);">Hold Billing</span>
<div class="chk" style="left:425px;top:300px;width:13px;height:13px;"></div>
<span class="t" style="left:443px;top:301.03px;font-size:12px;line-height:12px;transform:scaleX(0.89);">PRK interest</span>
<div class="grp" style="left:413px;top:364px;width:315px;height:90px;"></div>
<span class="t leg" style="left:424px;top:360.03px;font-size:12px;line-height:12px;transform:scaleX(0.89);">[ Notes ]</span>
<div class="inp" style="left:421px;top:375px;width:304px;height:76px;"></div>
<div class="grp" style="left:413px;top:465px;width:315px;height:128px;"></div>
<span class="t leg" style="left:424px;top:460.03px;font-size:12px;line-height:12px;transform:scaleX(0.89);">[ Emergency Contact Info ]</span>
<div class="lbl" style="left:421px;top:479px;width:72px;height:20px;"></div>
<span class="t" style="left:424px;top:483.03px;font-size:12px;line-height:12px;transform:scaleX(0.89);">Contact</span>
<div class="lbl" style="left:421px;top:503px;width:72px;height:20px;"></div>
<span class="t" style="left:424px;top:507.03px;font-size:12px;line-height:12px;transform:scaleX(0.89);">Relationship</span>
<div class="lbl" style="left:421px;top:527px;width:72px;height:20px;"></div>
<span class="t" style="left:424px;top:531.03px;font-size:12px;line-height:12px;transform:scaleX(0.89);">Home Phone</span>
<div class="lbl" style="left:421px;top:551px;width:72px;height:20px;"></div>
<span class="t" style="left:424px;top:555.03px;font-size:12px;line-height:12px;transform:scaleX(0.89);">Work Phone</span>
<div class="lbl" style="left:421px;top:575px;width:72px;height:20px;"></div>
<span class="t" style="left:424px;top:579.03px;font-size:12px;line-height:12px;transform:scaleX(0.89);">Cell Phone</span>
<div class="inp" style="left:497px;top:479px;width:216px;height:19px;"></div>
<div class="inp" style="left:497px;top:503px;width:216px;height:19px;"></div>
<div class="inp" style="left:497px;top:527px;width:123px;height:19px;"></div>
<div class="inp" style="left:497px;top:551px;width:123px;height:19px;"></div>
<div class="inp" style="left:497px;top:575px;width:123px;height:19px;"></div>
<div class="lbl" style="left:625px;top:551px;width:32px;height:20px;"></div>
<span class="t" style="left:628px;top:555.03px;font-size:12px;line-height:12px;transform:scaleX(0.89);">ext.</span>
<div class="inp" style="left:661px;top:551px;width:60px;height:19px;"></div>
<svg class="abs" style="left:662px;top:240px" width="15" height="12" viewBox="0 0 14 12" preserveAspectRatio="none"><path d="M2 0.500h3v2h-3zM9 0.500h3v2h-3z" fill="#000"/><path d="M1.500 2.500h4l1 2v7h-5.500v-6zM8.500 2.500h4l1 3v6h-5.500v-7z" fill="#000"/><rect x="5.500" y="4" width="3" height="3.500" fill="#000"/><path d="M2.500 9.500h2M9.500 9.500h2" stroke="#c8c8c8" stroke-width="1"/><path d="M2.500 6v2M11.500 6v2" stroke="#909090" stroke-width="0.800"/></svg>
<svg class="abs" style="left:390px;top:460px" width="15" height="12" viewBox="0 0 14 12" preserveAspectRatio="none"><path d="M2 0.500h3v2h-3zM9 0.500h3v2h-3z" fill="#000"/><path d="M1.500 2.500h4l1 2v7h-5.500v-6zM8.500 2.500h4l1 3v6h-5.500v-7z" fill="#000"/><rect x="5.500" y="4" width="3" height="3.500" fill="#000"/><path d="M2.500 9.500h2M9.500 9.500h2" stroke="#c8c8c8" stroke-width="1"/><path d="M2.500 6v2M11.500 6v2" stroke="#909090" stroke-width="0.800"/></svg>
<svg class="abs" style="left:306px;top:312px" width="19" height="18" viewBox="0 0 19 18" preserveAspectRatio="none"><path d="M1.500 2.500l1.500 2 1.500-2.500 1.500 2.500 1.500-2 1.500 2 1.500-2 2 1.500h2" fill="none" stroke="#000" stroke-width="1.100"/><path d="M5 5.500l3-2.500 3 3-3 2.500z" fill="#e8d8f8" stroke="#8030a0" stroke-width="1"/><path d="M8 8.500l3-2.500 7 7.500-3 2.500z" fill="#f8f020" stroke="#000" stroke-width="0.900"/><path d="M9.500 7.300l7 7.500" stroke="#000" stroke-width="0.800"/></svg>
<svg class="abs" style="left:302px;top:480px" width="19" height="18" viewBox="0 0 19 18" preserveAspectRatio="none"><path d="M1.500 2.500l1.500 2 1.500-2.500 1.500 2.500 1.500-2 1.500 2 1.500-2 2 1.500h2" fill="none" stroke="#000" stroke-width="1.100"/><path d="M5 5.500l3-2.500 3 3-3 2.500z" fill="#e8d8f8" stroke="#8030a0" stroke-width="1"/><path d="M8 8.500l3-2.500 7 7.500-3 2.500z" fill="#f8f020" stroke="#000" stroke-width="0.900"/><path d="M9.500 7.300l7 7.500" stroke="#000" stroke-width="0.800"/></svg>
<svg class="abs" style="left:703px;top:223px" width="12" height="30" viewBox="0 0 12 30" preserveAspectRatio="none"><path d="M1 8.500l2-1.500h6l2 1.500v8.500l-1.500 1v9l-2 1.500h-3l-2-1.500v-9l-1.500-1z" fill="#8c94e4" stroke="#303060" stroke-width="0.800"/><path d="M1.600 8.700l1.600-1.100h2.300v20.400h-0.800l-1.600-1.200v-9l-1.500-1z" fill="#b4c2f6"/><path d="M8.500 7.600l1.900 1.300v7.900l-1.500 1v8.800l-1.200 0.900z" fill="#5860b8"/><path d="M6 18v9" stroke="#404090" stroke-width="0.800"/><circle cx="6" cy="4" r="3.600" fill="#a8a8b0" stroke="#404040" stroke-width="0.600"/><circle cx="5.300" cy="3.300" r="2.300" fill="#e4e4e8"/><circle cx="4.800" cy="2.800" r="1.200" fill="#fff"/></svg>
<svg class="abs" style="left:690px;top:155px" width="17" height="15" viewBox="0 0 17 15" preserveAspectRatio="none"><rect x="1" y="0" width="15" height="3" fill="#b0b0b0"/><rect x="2" y="13" width="15" height="2" fill="#b0b0a0"/><rect x="0.800" y="2.800" width="14.400" height="10.400" fill="#ffff66" stroke="#000" stroke-width="1.600"/><path d="M3.500 6.500h7M3.500 8.500h8M3.500 10.500h5M10 10.500h2" stroke="#000" stroke-width="1.100"/><rect x="11.500" y="4.500" width="2" height="2" fill="#d02010"/></svg>
</body></html>
